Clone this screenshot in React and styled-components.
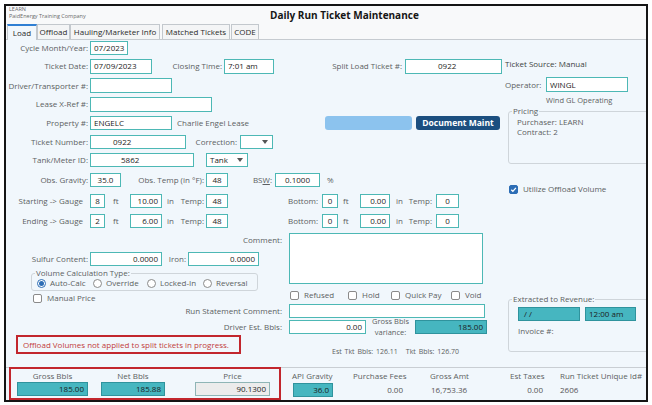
import React from "react";
import styled, { createGlobalStyle } from "styled-components";

const GlobalStyle = createGlobalStyle`
  html, body { margin: 0; padding: 0; background: #ffffff; }
  body { font-family: "Open Sans", "Noto Sans", sans-serif; }
  *, *::before, *::after { box-sizing: border-box; }
`;

const Window = styled.div`
  margin: 4px 0 0 4px;
  width: 644px;
  height: 398px;
  border: 2px solid #151515;
  background: #f1f7fc;
  overflow: hidden;
  display: flex;
  flex-direction: column;
  font-size: 8px;
  line-height: 1;
  color: #5c5f62;
`;

const Header = styled.div`
  flex: none;
  height: 18px;
  display: flex;
  background: #f8f9fa;
`;

const Company = styled.div`
  width: 264px;
  padding-left: 3px;
  font-size: 5.5px;
  color: #6a6a6a;
  div:first-child { height: 6px; line-height: 6px; }
  div:last-child { height: 8px; line-height: 8px; }
`;

const Title = styled.div`
  margin-top: 4px;
  font-size: 10px;
  line-height: 10px;
  font-weight: 700;
  color: #151515;
`;

const TabStrip = styled.div`
  flex: none;
  height: 16px;
  display: flex;
  align-items: flex-end;
  padding-left: 1px;
  background: #f8f9fa;
  border-bottom: 1px solid #c6cbd0;
`;

const Tab = styled.div`
  width: ${(p) => p.w}px;
  margin-left: ${(p) => p.ml ?? 0}px;
  height: ${(p) => (p.active ? 16 : 15)}px;
  margin-bottom: ${(p) => (p.active ? -1 : 0)}px;
  border: 1px solid #c3c8cd;
  border-bottom: none;
  border-top: ${(p) => (p.active ? "2px solid #2f7fd3" : "1px solid #c3c8cd")};
  background: ${(p) => (p.active ? "#f1f7fc" : "#f4f5f6")};
  display: flex;
  align-items: center;
  justify-content: center;
  font-size: 8px;
  color: #2a2a2a;
  white-space: nowrap;
`;

const Body = styled.div`
  flex: none;
  height: 327px;
  display: flex;
`;

const LeftCol = styled.div`
  width: 499px;
  flex: none;
  display: flex;
  flex-direction: column;
`;

const RightCol = styled.div`
  flex: 1;
  display: flex;
  flex-direction: column;
`;

const Row = styled.div`
  display: flex;
  align-items: center;
  flex: none;
  height: ${(p) => p.h}px;
  margin-top: ${(p) => p.mt ?? 0}px;
  margin-left: ${(p) => p.ml ?? 0}px;
`;

const Label = styled.span`
  flex: none;
  width: ${(p) => p.w ?? 82}px;
  text-align: ${(p) => (p.left ? "left" : "right")};
  padding-left: ${(p) => p.pl ?? 0}px;
  padding-right: ${(p) => p.pr ?? 0}px;
  white-space: nowrap;
  color: #5c5f62;
`;

const Field = styled.div`
  flex: none;
  width: ${(p) => p.w}px;
  height: ${(p) => p.h ?? 14}px;
  margin-left: ${(p) => p.ml ?? 2}px;
  border: 1px solid ${(p) => (p.teal ? "#2f939d" : p.gray ? "#8fb5b6" : "#4db8b5")};
  background: ${(p) => (p.teal ? "#46b6c0" : p.gray ? "#ececec" : "#ffffff")};
  color: #1c1c1c;
  display: flex;
  align-items: center;
  justify-content: ${(p) =>
    p.align === "right" ? "flex-end" : p.align === "center" ? "center" : "flex-start"};
  padding: 0 3px 0 ${(p) => p.pl ?? 3}px;
  white-space: nowrap;
`;

const SelectBox = styled(Field)`
  justify-content: space-between;
  padding-right: 4px;
`;

const Caret = () => (
  <svg width="6" height="4" viewBox="0 0 6 4">
    <path d="M0 0h6L3 4z" fill="#555" />
  </svg>
);

const Select = ({ children, ...rest }) => (
  <SelectBox {...rest}>
    <span>{children}</span>
    <Caret />
  </SelectBox>
);

const LightButton = styled.div`
  flex: none;
  width: 87px;
  height: 14px;
  border-radius: 3px;
  background: #8cc3ee;
`;

const DarkButton = styled.div`
  flex: none;
  width: 84px;
  height: 14px;
  margin-left: 4px;
  border-radius: 3px;
  background: #1c4f80;
  color: #ffffff;
  font-weight: 700;
  font-size: 8.5px;
  display: flex;
  align-items: center;
  justify-content: center;
`;

const LowerGrid = styled.div`
  display: grid;
  grid-template-columns: 279px 220px;
  grid-template-rows: 72px 16px 16px 1fr;
  flex: 1;
`;

const Cell = styled.div`
  display: flex;
  flex-direction: column;
`;

const Group = styled.fieldset`
  margin: ${(p) => p.mt ?? 0}px 0 0 ${(p) => p.ml ?? 0}px;
  padding: 0 0 0 ${(p) => p.pl ?? 0}px;
  width: ${(p) => p.w}px;
  height: ${(p) => p.h}px;
  border: 1px solid #cfd5da;
  border-radius: 3px;
  min-width: 0;
  flex: none;
`;

const Legend = styled.legend`
  padding: 0 1px;
  margin-left: ${(p) => p.ml ?? 2}px;
  height: 10px;
  line-height: 10px;
  font-size: 8px;
  color: #5c5f62;
`;

const Line = styled.div`
  height: 10px;
  line-height: 10px;
  margin-top: ${(p) => p.mt ?? 0}px;
  padding-left: ${(p) => p.pl ?? 0}px;
  color: ${(p) => (p.dark ? "#3c3f42" : "#5c5f62")};
  font-size: ${(p) => p.fs ?? 8}px;
  white-space: nowrap;
`;

const Box = styled.span`
  flex: none;
  width: 9px;
  height: 9px;
  border-radius: 2px;
  border: 1px solid ${(p) => (p.checked ? "#2c6db5" : "#8a8a8a")};
  background: ${(p) => (p.checked ? "#2c6db5" : "#ffffff")};
  display: flex;
  align-items: center;
  justify-content: center;
`;

const CheckItem = styled.div`
  flex: none;
  display: flex;
  align-items: center;
  gap: ${(p) => p.gap ?? 5}px;
  width: ${(p) => (p.w ? `${p.w}px` : "auto")};
  color: #5c5f62;
  white-space: nowrap;
`;

const Check = ({ label, checked, w }) => (
  <CheckItem w={w}>
    <Box checked={checked}>
      {checked && (
        <svg width="7" height="7" viewBox="0 0 10 10">
          <path d="M1.8 5.3l2.3 2.3 4.3-5" stroke="#fff" strokeWidth="1.8" fill="none" />
        </svg>
      )}
    </Box>
    <span>{label}</span>
  </CheckItem>
);

const Circle = styled.span`
  flex: none;
  width: 9px;
  height: 9px;
  border-radius: 50%;
  border: 1px solid ${(p) => (p.on ? "#2c6db5" : "#8a8a8a")};
  background: #fff;
  display: flex;
  align-items: center;
  justify-content: center;
  &::after {
    content: "";
    width: 5px;
    height: 5px;
    border-radius: 50%;
    background: ${(p) => (p.on ? "#2c6db5" : "transparent")};
  }
`;

const Radio = ({ label, on, w }) => (
  <CheckItem w={w} gap={4}>
    <Circle on={on} />
    <span>{label}</span>
  </CheckItem>
);

const TextArea = styled.div`
  margin: 2px 0 0 4px;
  width: 194px;
  height: 51px;
  border: 1px solid #4db8b5;
  background: #fff;
`;

const VarianceLabel = styled.div`
  flex: none;
  width: 49px;
  text-align: center;
  line-height: 11px;
  color: #5c5f62;
  font-size: 7.5px;
`;

const Warning = styled.div`
  margin-left: 10px;
  width: 225px;
  height: 19px;
  border: 2px solid #c2262d;
  color: #c23b3b;
  display: flex;
  align-items: center;
  padding-left: 5px;
  white-space: nowrap;
`;

const EstLine = styled.div`
  margin-top: 12px;
  padding-left: 47px;
  height: 10px;
  line-height: 10px;
  font-size: 7px;
  color: #5c5f62;
  word-spacing: 1px;
  span + span { margin-left: 8px; }
`;

const BottomStrip = styled.div`
  flex: none;
  height: 33px;
  display: flex;
  border-top: 1px solid #c9ced3;
`;

const RedGroup = styled.div`
  margin: -1px 0 0 3px;
  width: 274px;
  height: 33px;
  border: 2px solid #c2262d;
  display: flex;
`;

const BCol = styled.div`
  flex: none;
  display: flex;
  flex-direction: column;
  align-items: ${(p) => (p.center ? "center" : "stretch")};
  width: ${(p) => p.w}px;
  margin-left: ${(p) => p.ml}px;
  padding-top: ${(p) => p.pt ?? 2}px;
`;

const BLabel = styled.div`
  height: 12px;
  line-height: 12px;
  color: #5c5f62;
  white-space: nowrap;
  text-align: ${(p) => p.align ?? "left"};
`;

const BValue = styled.div`
  height: 14px;
  margin-top: 1px;
  line-height: 14px;
  color: #555;
  text-align: ${(p) => p.align ?? "left"};
  padding: 0 ${(p) => p.pr ?? 0}px 0 ${(p) => p.pl ?? 0}px;
`;

const GaugeRow = ({ label, feet, inches, temp }) => (
  <>
    <Label pr={5}>{label}</Label>
    <Field w={15} align="center">{feet}</Field>
    <Label left pl={8} w={25}>ft</Label>
    <Field w={32} ml={0} align="right">{inches}</Field>
    <Label left pl={5} w={14}>in</Label>
    <Label w={28}>Temp:</Label>
    <Field w={22} align="center">{temp}</Field>
    <Label w={90}>Bottom:</Label>
    <Field w={16} ml={4} align="center">0</Field>
    <Label left pl={5} w={22}>ft</Label>
    <Field w={30} ml={0} align="right">0.00</Field>
    <Label left pl={6} w={14}>in</Label>
    <Label w={28}>Temp:</Label>
    <Field w={23} ml={4} align="center">0</Field>
  </>
);

export default function App() {
  return (
    <>
      <GlobalStyle />
      <Window>
        <Header>
          <Company>
            <div>LEARN</div>
            <div>PaidEnergy Training Company</div>
          </Company>
          <Title>Daily Run Ticket Maintenance</Title>
        </Header>
        <TabStrip>
          <Tab w={30} active>Load</Tab>
          <Tab w={33}>Offload</Tab>
          <Tab w={90}>Hauling/Marketer Info</Tab>
          <Tab w={68} ml={2}>Matched Tickets</Tab>
          <Tab w={28} ml={1}>CODE</Tab>
        </TabStrip>

        <Body>
          <LeftCol>
            <Row h={16}>
              <Label>Cycle Month/Year:</Label>
              <Field w={38}>07/2023</Field>
            </Row>
            <Row h={20}>
              <Label>Ticket Date:</Label>
              <Field w={62} h={15}>07/09/2023</Field>
              <Label w={70}>Closing Time:</Label>
              <Field w={50} h={15}>7:01 am</Field>
              <Label w={128}>Split Load Ticket #:</Label>
              <Field w={97} h={15} ml={3} pl={32}>0922</Field>
            </Row>
            <Row h={19}>
              <Label>Driver/Transporter #:</Label>
              <Field w={82} h={15} />
            </Row>
            <Row h={18}>
              <Label>Lease X-Ref #:</Label>
              <Field w={122} h={15} />
            </Row>
            <Row h={20}>
              <Label>Property #:</Label>
              <Field w={82}>ENGELC</Field>
              <Label left pl={5} w={153}>Charlie Engel Lease</Label>
              <LightButton />
              <DarkButton>Document Maint</DarkButton>
            </Row>
            <Row h={18}>
              <Label>Ticket Number:</Label>
              <Field w={96} pl={22}>0922</Field>
              <Label w={51}>Correction:</Label>
              <Select w={33} ml={3} />
            </Row>
            <Row h={18}>
              <Label>Tank/Meter ID:</Label>
              <Field w={104} pl={30}>5862</Field>
              <Select w={42} ml={12}>Tank</Select>
            </Row>
            <Row h={21}>
              <Label>Obs. Gravity:</Label>
              <Field w={31} align="center">35.0</Field>
              <Label w={83}>Obs. Temp (in °F):</Label>
              <Field w={22} align="center">48</Field>
              <Label w={44}>BS<u>W</u>:</Label>
              <Field w={45} ml={3} align="center">0.1000</Field>
              <Label left pl={7} w={20}>%</Label>
            </Row>
            <Row h={21}>
              <GaugeRow label="Starting -> Gauge" feet="8" inches="10.00" temp="48" />
            </Row>
            <Row h={20}>
              <GaugeRow label="Ending -> Gauge" feet="2" inches="6.00" temp="48" />
            </Row>

            <LowerGrid>
              <Cell>
                <Row h={14} mt={2}>
                  <Label w={279} pr={3}>Comment:</Label>
                </Row>
                <Row h={14} mt={5}>
                  <Label>Sulfur Content:</Label>
                  <Field w={72} align="right">0.0000</Field>
                  <Label w={24}>Iron:</Label>
                  <Field w={71} align="right">0.0000</Field>
                </Row>
                <Group mt={2} ml={25} w={227} h={23} pl={5}>
                  <Legend ml={-2}>Volume Calculation Type:</Legend>
                  <Row h={10}>
                    <Radio on label="Auto-Calc" w={56} />
                    <Radio label="Override" w={54} />
                    <Radio label="Locked-In" w={56} />
                    <Radio label="Reversal" />
                  </Row>
                </Group>
                <Row h={10} mt={2} ml={27}>
                  <Check label="Manual Price" />
                </Row>
              </Cell>
              <Cell>
                <TextArea />
                <Row h={12} mt={5} ml={5}>
                  <Check label="Refused" w={58} />
                  <Check label="Hold" w={43} />
                  <Check label="Quick Pay" w={60} />
                  <Check label="Void" />
                </Row>
              </Cell>

              <Row h={16}>
                <Label w={279} pr={3}>Run Statement Comment:</Label>
              </Row>
              <Row h={16}>
                <Field w={196} ml={4} />
              </Row>

              <Row h={16}>
                <Label w={279} pr={3}>Driver Est. Bbls:</Label>
              </Row>
              <Row h={16}>
                <Field w={77} ml={4} align="right">0.00</Field>
                <VarianceLabel>
                  Gross Bbls
                  <br />
                  variance:
                </VarianceLabel>
                <Field w={72} ml={0} teal align="right">185.00</Field>
              </Row>

              <Cell>
                <Warning>Offload Volumes not applied to split tickets in progress.</Warning>
              </Cell>
              <Cell>
                <EstLine>
                  <span>Est Tkt Bbls: 126.11</span>
                  <span>Tkt Bbls: 126.70</span>
                </EstLine>
              </Cell>
            </LowerGrid>
          </LeftCol>

          <RightCol>
            <Line mt={19} dark>Ticket Source: Manual</Line>
            <Row h={15} mt={8}>
              <Label w={36}>Operator:</Label>
              <Field w={82} h={15} ml={5}>WINGL</Field>
            </Row>
            <Line mt={3} pl={41} fs={7.5}>Wind GL Operating</Line>
            <Group mt={1} ml={3} w={150} h={58} pl={8}>
              <Legend ml={-5}>Pricing</Legend>
              <Line mt={1}>Purchaser: LEARN</Line>
              <Line>Contract: 2</Line>
            </Group>
            <Row h={10} mt={20} ml={4}>
              <Check checked label="Utilize Offload Volume" />
            </Row>
            <Group mt={100} ml={3} w={150} h={58} pl={9}>
              <Legend ml={-6}>Extracted to Revenue:</Legend>
              <Row h={14} mt={3}>
                <Field w={62} ml={0} teal pl={5}>/ /</Field>
                <Field w={51} ml={5} teal>12:00 am</Field>
              </Row>
              <Line mt={5}>Invoice #:</Line>
            </Group>
          </RightCol>
        </Body>

        <BottomStrip>
          <RedGroup>
            <BCol center w={71} ml={6} pt={1}>
              <BLabel>Gross Bbls</BLabel>
              <Field w={71} ml={0} teal align="right">185.00</Field>
            </BCol>
            <BCol center w={64} ml={13} pt={1}>
              <BLabel>Net Bbls</BLabel>
              <Field w={64} ml={0} teal align="right">185.88</Field>
            </BCol>
            <BCol center w={75} ml={30} pt={1}>
              <BLabel>Price</BLabel>
              <Field w={75} ml={0} gray align="right">90.1300</Field>
            </BCol>
          </RedGroup>
          <BCol w={42} ml={11}>
            <BLabel>API Gravity</BLabel>
            <Field w={40} ml={1} teal align="right" style={{ marginTop: 1 }}>36.0</Field>
          </BCol>
          <BCol w={53} ml={19}>
            <BLabel>Purchase Fees</BLabel>
            <BValue align="right" pr={3}>0.00</BValue>
          </BCol>
          <BCol w={40} ml={24}>
            <BLabel>Gross Amt</BLabel>
            <BValue pl={1}>16,753.36</BValue>
          </BCol>
          <BCol w={34} ml={40}>
            <BLabel>Est Taxes</BLabel>
            <BValue align="right" pr={1}>0.00</BValue>
          </BCol>
          <BCol w={86} ml={16}>
            <BLabel>Run Ticket Unique Id#</BLabel>
            <BValue>2606</BValue>
          </BCol>
        </BottomStrip>
      </Window>
    </>
  );
}
